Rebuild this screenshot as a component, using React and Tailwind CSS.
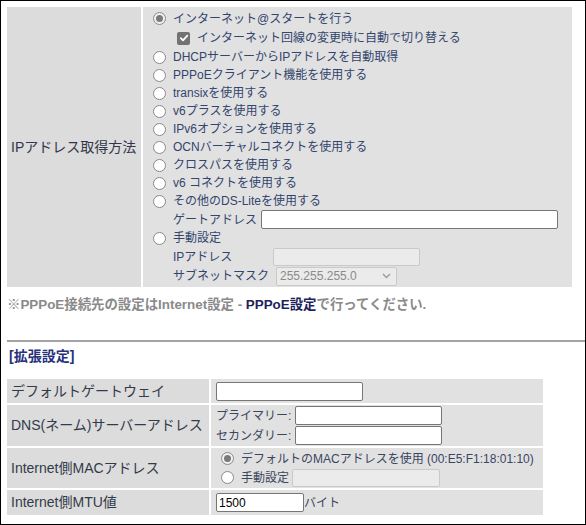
import React from "react";

function Radio({ checked }) {
  return checked ? (
    <span className="ml-[5px] mr-[7px] flex h-[13px] w-[13px] shrink-0 items-center justify-center rounded-full border border-[#8a8a8a] bg-[#f0f0f0]">
      <span className="h-[7px] w-[7px] rounded-full bg-[#7a7a7a]" />
    </span>
  ) : (
    <span className="ml-[5px] mr-[7px] h-[13px] w-[13px] shrink-0 rounded-full border border-[#8a8a8a] bg-white" />
  );
}

function Check() {
  return (
    <span className="ml-[29px] mr-[7px] flex h-[13px] w-[13px] shrink-0 items-center justify-center rounded-[2px] bg-[#727272]">
      <svg width="10" height="10" viewBox="0 0 10 10">
        <path d="M1.8 5.2 L4 7.4 L8.3 2.6" fill="none" stroke="white" strokeWidth="1.8" strokeLinecap="round" strokeLinejoin="round" />
      </svg>
    </span>
  );
}

function OptRow({ checked, children }) {
  return (
    <div className="flex h-[18px] items-center">
      <Radio checked={checked} />
      <span className="whitespace-nowrap">{children}</span>
    </div>
  );
}

export default function App() {
  return (
    <div className="h-[525px] w-[586px] overflow-hidden border border-black bg-white pl-[6px] pt-[6px] font-['Liberation_Sans','Noto_Sans_CJK_JP',sans-serif]">
      {/* top table */}
      <div className="flex w-[565px] gap-[2px]">
        <div className="flex w-[134px] shrink-0 items-center bg-[#dcdcdc] pl-[4px] text-[14px] text-[#30374a]">
          IPアドレス取得方法
        </div>
        <div className="flex-1 bg-[#e1e1e1] pb-[1px] pl-[5px] pt-[2px] text-[12px] leading-none text-[#33456e]">
          <div className="flex h-[19px] items-center">
            <Radio checked />
            <span className="whitespace-nowrap">インターネット@スタートを行う</span>
          </div>
          <div className="flex h-[20px] items-center">
            <Check />
            <span className="whitespace-nowrap">インターネット回線の変更時に自動で切り替える</span>
          </div>
          <OptRow>DHCPサーバーからIPアドレスを自動取得</OptRow>
          <OptRow>PPPoEクライアント機能を使用する</OptRow>
          <OptRow>transixを使用する</OptRow>
          <OptRow>v6プラスを使用する</OptRow>
          <OptRow>IPv6オプションを使用する</OptRow>
          <OptRow>OCNバーチャルコネクトを使用する</OptRow>
          <OptRow>クロスパスを使用する</OptRow>
          <OptRow>v6 コネクトを使用する</OptRow>
          <OptRow>その他のDS-Liteを使用する</OptRow>
          <div className="flex h-[19px] items-center pl-[25px]">
            <span className="w-[88px] shrink-0 whitespace-nowrap">ゲートアドレス</span>
            <div className="h-[19px] w-[297px] rounded-[2px] border border-[#767676] bg-white" />
          </div>
          <div className="flex h-[18px] items-center">
            <Radio />
            <span>手動設定</span>
          </div>
          <div className="flex h-[19px] items-center pl-[25px]">
            <span className="w-[100px] shrink-0 whitespace-nowrap">IPアドレス</span>
            <div className="h-[18px] w-[147px] rounded-[2px] border border-[#c9c9c9] bg-[#ebebeb]" />
          </div>
          <div className="flex h-[20px] items-center pl-[25px]">
            <span className="w-[103px] shrink-0 whitespace-nowrap">サブネットマスク</span>
            <div className="flex h-[19px] w-[121px] items-center justify-between rounded-[2px] border border-[#c9c9c9] bg-[#ebebeb] pl-[3px] pr-[5px] text-[#8a8a8a]">
              <span>255.255.255.0</span>
              <svg width="9" height="6" viewBox="0 0 9 6">
                <path d="M1 1 L4.5 4.5 L8 1" fill="none" stroke="#9a9a9a" strokeWidth="1.4" />
              </svg>
            </div>
          </div>
        </div>
      </div>

      {/* note */}
      <div className="mt-[9px] h-[18px] whitespace-nowrap text-[13.4px] font-bold leading-[18px] text-[#8a8a8a]">
        ※PPPoE接続先の設定はInternet設定 - <span className="text-[#1d1f5e]">PPPoE設定</span>で行ってください.
      </div>

      <div className="mt-[26px] h-[2px] bg-[#a3a3a3]" />

      <div className="ml-[2px] mt-[5px] h-[18px] text-[14px] font-bold leading-[18px] text-[#27317a]">
        [拡張設定]
      </div>

      {/* bottom table */}
      <div className="mt-[14px] grid w-[536px] grid-cols-[202px_332px] gap-[2px] text-[#333a4a]">
        <div className="flex h-[24px] items-center bg-[#dcdcdc] pl-[4px] text-[14px]">デフォルトゲートウェイ</div>
        <div className="flex h-[24px] items-center bg-[#e1e1e1] pl-[5px]">
          <div className="h-[19px] w-[147px] rounded-[2px] border border-[#767676] bg-white" />
        </div>

        <div className="flex h-[41px] items-center bg-[#dcdcdc] pl-[4px] text-[14px]">DNS(ネーム)サーバーアドレス</div>
        <div className="flex h-[41px] flex-col justify-center gap-[1px] bg-[#e1e1e1] pl-[5px] text-[12px] text-[#3a4560]">
          <div className="flex items-center">
            <span className="w-[79px] shrink-0 whitespace-nowrap">プライマリー:</span>
            <div className="h-[19px] w-[147px] rounded-[2px] border border-[#767676] bg-white" />
          </div>
          <div className="flex items-center">
            <span className="w-[79px] shrink-0 whitespace-nowrap">セカンダリー:</span>
            <div className="h-[19px] w-[147px] rounded-[2px] border border-[#767676] bg-white" />
          </div>
        </div>

        <div className="flex h-[40px] items-center bg-[#dcdcdc] pl-[4px] text-[14px]">Internet側MACアドレス</div>
        <div className="flex h-[40px] flex-col justify-center bg-[#e1e1e1] pl-[5px] text-[12px] text-[#3a4560]">
          <div className="flex h-[19px] items-center">
            <Radio checked />
            <span className="whitespace-nowrap">デフォルトのMACアドレスを使用 (00:E5:F1:18:01:10)</span>
          </div>
          <div className="flex h-[19px] items-center">
            <Radio />
            <span className="w-[51px] shrink-0 whitespace-nowrap">手動設定</span>
            <div className="h-[18px] w-[148px] rounded-[2px] border border-[#c9c9c9] bg-[#ebebeb]" />
          </div>
        </div>

        <div className="flex h-[25px] items-center bg-[#dcdcdc] pl-[4px] text-[14px]">Internet側MTU値</div>
        <div className="flex h-[25px] items-center bg-[#e1e1e1] pl-[5px] text-[12px] text-[#3a4560]">
          <div className="flex h-[19px] w-[88px] items-center rounded-[2px] border border-[#767676] bg-white pl-[2px] text-[12px] text-black">
            1500
          </div>
          <span>バイト</span>
        </div>
      </div>
    </div>
  );
}
